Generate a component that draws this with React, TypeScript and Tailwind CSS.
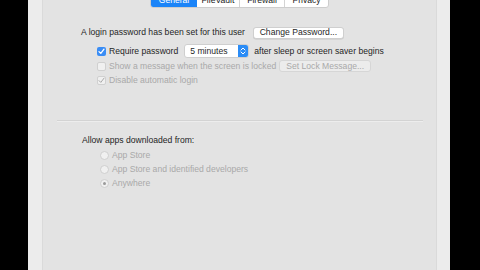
import React from "react";

const font = { fontFamily: '"Liberation Sans", Arial, sans-serif' };

function CheckBox({ checked, disabled }: { checked?: boolean; disabled?: boolean }) {
  if (checked && !disabled) {
    return (
      <div className="w-[9px] h-[9px] rounded-[2px] bg-[#3a8df5] flex items-center justify-center shrink-0">
        <svg width="7" height="7" viewBox="0 0 7 7">
          <path d="M1 3.6 L2.8 5.4 L6 1.2" stroke="white" strokeWidth="1.3" fill="none" strokeLinecap="round" strokeLinejoin="round" />
        </svg>
      </div>
    );
  }
  return (
    <div className="w-[9px] h-[9px] rounded-[2px] bg-[#f0f0f0] border border-[#d0d0d0] flex items-center justify-center shrink-0">
      {checked && (
        <svg width="7" height="7" viewBox="0 0 7 7">
          <path d="M1 3.6 L2.8 5.4 L6 1.2" stroke="#a8a8a8" strokeWidth="1" fill="none" strokeLinecap="round" strokeLinejoin="round" />
        </svg>
      )}
    </div>
  );
}

function Radio({ selected }: { selected?: boolean }) {
  return (
    <div className="w-[9px] h-[9px] rounded-full bg-[#f0f0f0] border border-[#cfcfcf] flex items-center justify-center shrink-0">
      {selected && <div className="w-[3px] h-[3px] rounded-full bg-[#9a9a9a]" />}
    </div>
  );
}

export default function App() {
  return (
    <div className="w-[480px] h-[270px] bg-black flex overflow-hidden text-[8.6px] leading-none" style={font}>
      <div className="w-[28px] shrink-0" />
      <div className="w-[422px] h-full bg-[#ececec] pl-[14px] pr-[13px] shrink-0">
        <div className="w-[395px] h-full bg-[#e3e3e3] border-l border-r border-[#dadada] flex flex-col">
          {/* Tabs */}
          <div className="mt-[-4px] h-[12px] flex justify-center">
            <div className="flex h-[12px] rounded-[3px] bg-white border border-[#cdcdcd] overflow-hidden">
              <div className="w-[46px] bg-[#1b84f8] text-white flex items-end justify-center pb-[2px]">General</div>
              <div className="w-[43px] border-r border-[#d4d4d4] text-[#222] flex items-end justify-center pb-[2px]">FileVault</div>
              <div className="w-[45px] border-r border-[#d4d4d4] text-[#222] flex items-end justify-center pb-[2px]">Firewall</div>
              <div className="w-[43px] text-[#222] flex items-end justify-center pb-[2px]">Privacy</div>
            </div>
          </div>

          <div className="pl-[38px] text-[#1f1f1f]">
            {/* Row 1 */}
            <div className="mt-[18px] h-[13px] flex items-center">
              <span>A login password has been set for this user</span>
              <div className="ml-[8px] w-[91px] h-[12px] bg-white rounded-[3px] border border-[#cfcfcf] shadow-[0_0.5px_0.5px_rgba(0,0,0,0.12)] flex items-center justify-center">
                Change Password...
              </div>
            </div>

            {/* Row 2 */}
            <div className="mt-[5px] h-[14px] flex items-center pl-[16px]">
              <CheckBox checked />
              <span className="ml-[3px]">Require password</span>
              <div className="ml-[6px] w-[65px] h-[14px] bg-white rounded-[3px] border border-[#cfcfcf] flex items-center overflow-hidden">
                <span className="flex-1 pl-[5px]">5 minutes</span>
                <div className="w-[10px] h-full bg-[#2b8cf6] flex flex-col items-center justify-center">
                  <svg width="6" height="10" viewBox="0 0 6 10">
                    <path d="M1 4 L3 2 L5 4 M1 6 L3 8 L5 6" stroke="white" strokeWidth="1" fill="none" strokeLinecap="round" strokeLinejoin="round" />
                  </svg>
                </div>
              </div>
              <span className="ml-[5px]">after sleep or screen saver begins</span>
            </div>

            {/* Row 3 */}
            <div className="mt-[2px] h-[12px] flex items-center pl-[16px] text-[#a9a9a9]">
              <CheckBox />
              <span className="ml-[3px]">Show a message when the screen is locked</span>
              <div className="ml-[3px] w-[92px] h-[12px] bg-[#ececec] rounded-[3px] border border-[#d6d6d6] flex items-center justify-center">
                Set Lock Message...
              </div>
            </div>

            {/* Row 4 */}
            <div className="mt-[2px] h-[12px] flex items-center pl-[16px] text-[#a9a9a9]">
              <CheckBox checked disabled />
              <span className="ml-[3px]">Disable automatic login</span>
            </div>
          </div>

          {/* Divider */}
          <div className="mt-[34px] ml-[14px] mr-[13px] h-[2px] border-t border-[#d3d3d3] border-b border-b-[#ededed]" />

          <div className="pl-[39px] text-[#1f1f1f]">
            <div className="mt-[12px] h-[12px] flex items-center">Allow apps downloaded from:</div>
            <div className="mt-[2px] pl-[18px] text-[#a9a9a9]">
              <div className="h-[14px] flex items-center">
                <Radio />
                <span className="ml-[3px]">App Store</span>
              </div>
              <div className="h-[14px] flex items-center">
                <Radio />
                <span className="ml-[3px]">App Store and identified developers</span>
              </div>
              <div className="h-[14px] flex items-center">
                <Radio selected />
                <span className="ml-[3px]">Anywhere</span>
              </div>
            </div>
          </div>
        </div>
      </div>
      <div className="flex-1" />
    </div>
  );
}
